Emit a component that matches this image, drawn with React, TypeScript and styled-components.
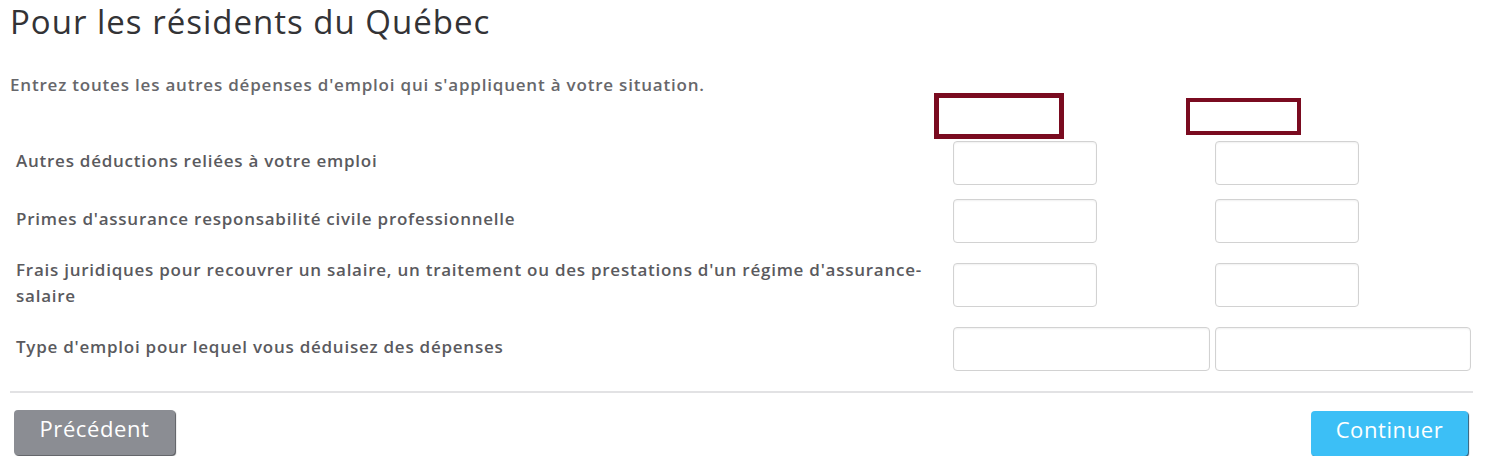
import styled, { createGlobalStyle } from "styled-components";

const GlobalStyle = createGlobalStyle`
  body {
    margin: 0;
    background: #ffffff;
    font-family: "Open Sans", "Liberation Sans", sans-serif;
  }
`;

const Page = styled.div`
  padding: 2px 14px 0 10px;
  width: 1487px;
  box-sizing: border-box;
`;

const Title = styled.h1`
  margin: 0;
  font-size: 33px;
  line-height: 40px;
  letter-spacing: 1px;
  font-weight: 400;
  color: #333336;
`;

const Intro = styled.p`
  margin: 31px 0 0;
  font-size: 17px;
  line-height: 24px;
  letter-spacing: 0.8px;
  font-weight: 600;
  color: #67676b;
`;

const Fields = styled.div`
  position: relative;
  display: flex;
  flex-direction: column;
  gap: 14px;
  padding-top: 44px;
`;

const Mark = styled.div<{ $left: number; $top: number; $w: number; $h: number; $b: number }>`
  position: absolute;
  left: ${(p) => p.$left}px;
  top: ${(p) => p.$top}px;
  width: ${(p) => p.$w}px;
  height: ${(p) => p.$h}px;
  border: ${(p) => p.$b}px solid #7a0b20;
  box-sizing: border-box;
`;

const Row = styled.div`
  display: grid;
  grid-template-columns: 1fr 257px 256px;
  column-gap: 5px;
  align-items: center;
  padding: 0 2px 0 6px;
`;

const Label = styled.label`
  font-size: 17px;
  line-height: 26px;
  letter-spacing: 0.75px;
  font-weight: 600;
  color: #5a5a5e;
  margin-bottom: 4px;
  padding-right: 17px;
`;

const Input = styled.input<{ $wide?: boolean }>`
  width: ${(p) => (p.$wide ? "100%" : "144px")};
  height: 44px;
  box-sizing: border-box;
  border: 1px solid #d2d2d2;
  border-radius: 4px;
  box-shadow: inset 0 1px 2px rgba(0, 0, 0, 0.06);
  background: #fff;
  outline: none;
`;

const Divider = styled.hr`
  margin: 20px 0 0;
  border: none;
  height: 2px;
  background: #e2e2e4;
`;

const Actions = styled.div`
  display: flex;
  justify-content: space-between;
  align-items: flex-start;
  margin-top: 17px;
  padding: 0 5px 0 4px;
`;

const Button = styled.button<{ $primary?: boolean }>`
  height: 45px;
  width: ${(p) => (p.$primary ? "157px" : "161px")};
  margin-top: ${(p) => (p.$primary ? "1px" : "0")};
  border: none;
  border-radius: 4px;
  background: ${(p) => (p.$primary ? "#3cbff6" : "#8b8d93")};
  box-shadow: 1px 1px 1px ${(p) => (p.$primary ? "#2a5b78" : "#55575c")};
  color: #ffffff;
  font-family: "Open Sans", "Liberation Sans", sans-serif;
  font-size: 22px;
  letter-spacing: 0.6px;
  line-height: 28px;
  padding: 0 0 9px;
`;

const rows = [
  { label: "Autres déductions reliées à votre emploi", wide: false },
  { label: "Primes d'assurance responsabilité civile professionnelle", wide: false },
  {
    label:
      "Frais juridiques pour recouvrer un salaire, un traitement ou des prestations d'un régime d'assurance-salaire",
    wide: false,
  },
  { label: "Type d'emploi pour lequel vous déduisez des dépenses", wide: true },
];

export default function App() {
  return (
    <>
      <GlobalStyle />
      <Page>
        <Title>Pour les résidents du Québec</Title>
        <Intro>Entrez toutes les autres dépenses d'emploi qui s'appliquent à votre situation.</Intro>
        <Fields>
          <Mark $left={924} $top={-4} $w={130} $h={46} $b={5} />
          <Mark $left={1176} $top={1} $w={115} $h={37} $b={4} />
          {rows.map((r) => (
            <Row key={r.label}>
              <Label>{r.label}</Label>
              <Input $wide={r.wide} />
              <Input $wide={r.wide} />
            </Row>
          ))}
        </Fields>
        <Divider />
        <Actions>
          <Button>Précédent</Button>
          <Button $primary>Continuer</Button>
        </Actions>
      </Page>
    </>
  );
}
